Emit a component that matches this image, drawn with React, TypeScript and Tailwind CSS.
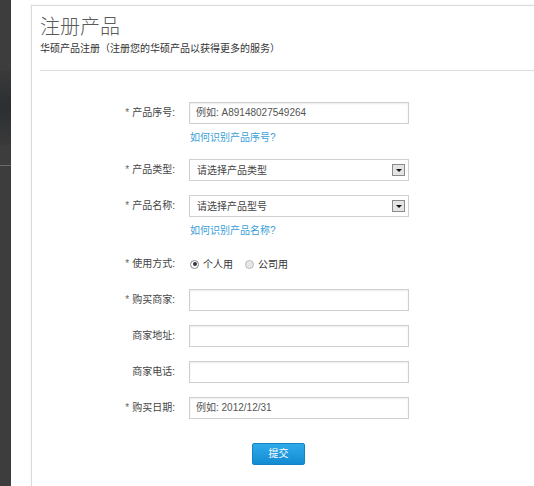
const FONT = { fontFamily: '"Liberation Sans", "Noto Sans CJK SC", sans-serif' };

function Label({ text, req }: { text: string; req?: boolean }) {
  return (
    <div className="w-[136px] shrink-0 text-right pr-[1px] text-[10px] text-[#444] leading-[22px]">
      {req && <span className="text-[#666] mr-[3px]">*</span>}
      {text}:
    </div>
  );
}

function TextBox({ placeholder }: { placeholder?: string }) {
  return (
    <div className="w-[220px] h-[22px] border border-[#cfcfcf] shadow-[inset_0_1px_2px_rgba(0,0,0,0.08)] bg-white pl-[6px] text-[10px] leading-[20px] text-[#555]">
      {placeholder}
    </div>
  );
}

function SelectBox({ text }: { text: string }) {
  return (
    <div className="w-[220px] h-[22px] border border-[#cfcfcf] bg-white flex items-center justify-between pl-[7px] pr-[3px] text-[10px] text-[#444]">
      <span>{text}</span>
      <span className="w-[13px] h-[12px] border border-[#8a8a8a] bg-[#e4e4e4] flex items-center justify-center">
        <span className="w-0 h-0 border-l-[3px] border-r-[3px] border-t-[3px] border-l-transparent border-r-transparent border-t-[#111]" />
      </span>
    </div>
  );
}

function Row({ label, req, children, className }: { label: string; req?: boolean; children: React.ReactNode; className?: string }) {
  return (
    <div className={'flex items-start gap-[13px] ' + (className ?? '')}>
      <Label text={label} req={req} />
      <div className="flex flex-col">{children}</div>
    </div>
  );
}

function HelpLink({ text }: { text: string }) {
  return <div className="text-[10px] text-[#3b9fd9] leading-[14px] mt-[7px] pl-[1px]">{text}</div>;
}

export default function App() {
  return (
    <div className="w-[534px] h-[486px] bg-white flex overflow-hidden" style={FONT}>
      {/* dark side strip */}
      <div className="w-[11px] shrink-0 bg-[#3d3d3d] flex flex-col">
        <div className="h-[70px]" />
        <div className="h-[75px] bg-gradient-to-b from-[#3a3a3a] via-[#2b2f32] to-[#3a3a3a]" />
        <div className="h-[20px]" />
        <div className="h-[1px] bg-[#6a6a6a]" />
      </div>
      <div className="w-[20px] shrink-0" />
      {/* panel */}
      <div className="flex-1 mt-[5px] border-l border-t border-[#dadada] shadow-[-1px_-1px_2px_rgba(0,0,0,0.04)] flex flex-col">
        <div className="pl-[8px] pt-[8px]">
          <div className="text-[20px] leading-[26px] text-[#5a5a5a] font-light">注册产品</div>
          <div className="text-[10px] leading-[14px] text-[#333] mt-[2px]">华硕产品注册（注册您的华硕产品以获得更多的服务）</div>
        </div>
        <div className="ml-[8px] mt-[14px] h-[1px] bg-[#dcdcdc]" />
        <div className="pl-[8px] pt-[31px] flex flex-col">
          <Row label="产品序号" req>
            <TextBox placeholder="例如: A89148027549264" />
            <HelpLink text="如何识别产品序号?" />
          </Row>
          <Row label="产品类型" req className="mt-[14px]">
            <SelectBox text="请选择产品类型" />
          </Row>
          <Row label="产品名称" req className="mt-[14px]">
            <SelectBox text="请选择产品型号" />
            <HelpLink text="如何识别产品名称?" />
          </Row>
          <Row label="使用方式" req className="mt-[15px]">
            <div className="h-[22px] flex items-center text-[10px] text-[#333] pl-[1px]">
              <span className="w-[9px] h-[9px] rounded-full border border-[#888] bg-white flex items-center justify-center">
                <span className="w-[4px] h-[4px] rounded-full bg-[#334]" />
              </span>
              <span className="ml-[4px]">个人用</span>
              <span className="ml-[12px] w-[9px] h-[9px] rounded-full border border-[#bbb] bg-[#e6e6e6]" />
              <span className="ml-[4px]">公司用</span>
            </div>
          </Row>
          <Row label="购买商家" req className="mt-[14px]">
            <TextBox />
          </Row>
          <Row label="商家地址" className="mt-[14px]">
            <TextBox />
          </Row>
          <Row label="商家电话" className="mt-[14px]">
            <TextBox />
          </Row>
          <Row label="购买日期" req className="mt-[14px]">
            <TextBox placeholder="例如: 2012/12/31" />
          </Row>
          <div className="mt-[21px] pl-[212px]">
            <button className="w-[53px] h-[22px] rounded-[2px] bg-gradient-to-b from-[#2eaaea] to-[#138bd3] border border-[#1183c6] text-white text-[10px] leading-[20px]">
              提交
            </button>
          </div>
        </div>
      </div>
    </div>
  );
}
